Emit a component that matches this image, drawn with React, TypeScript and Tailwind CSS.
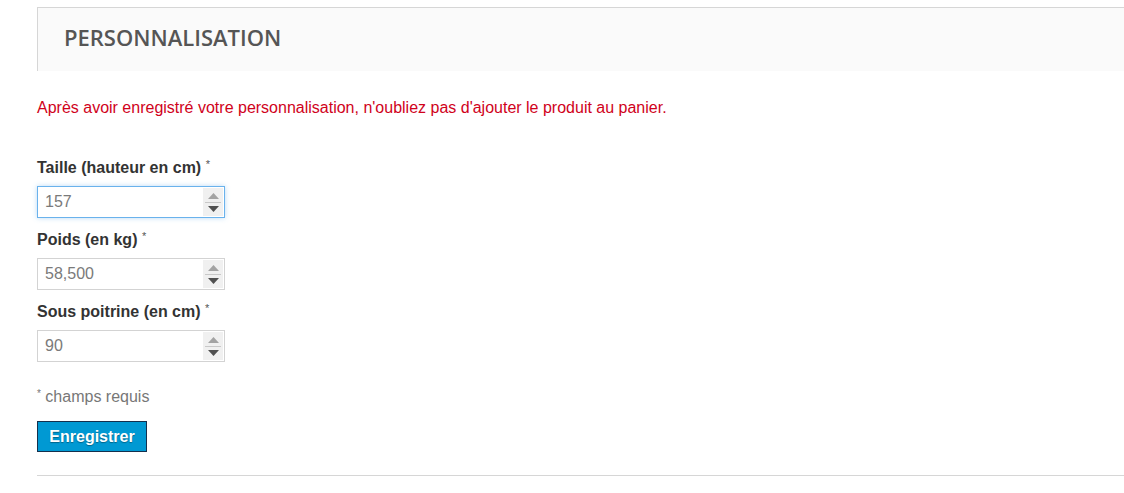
import React, { useState } from 'react';

const fields = [
  { id: "taille", label: "Taille (hauteur en cm)", value: "157", focused: true },
  { id: "poids", label: "Poids (en kg)", value: "58,500", focused: false },
  { id: "poitrine", label: "Sous poitrine (en cm)", value: "90", focused: false },
];

const NumberField = ({ label, value, focused }: { label: string; value: string; focused: boolean }) => {
  const [val, setVal] = useState(value);
  return (
    <div className="flex flex-col">
      <label className="text-[16px] leading-[18px] font-bold text-[#333]">
        {label} <sup className="font-normal text-[11px] text-[#555]">*</sup>
      </label>
      <div
        className={
          focused
            ? "mt-[9px] w-[188px] h-[32px] flex bg-white border border-[#6ab2ec] shadow-[0_0_5px_rgba(102,175,233,0.45)]"
            : "mt-[9px] w-[188px] h-[32px] flex bg-white border border-[#d3d3d3]"
        }
      >
        <input
          value={val}
          onChange={(e) => setVal(e.target.value)}
          className="flex-1 min-w-0 pl-[7px] text-[16px] text-[#7a7a7a] outline-none bg-transparent"
        />
        <div className="w-[20px] my-[1px] mr-[1px] bg-[#f0f0f0] flex flex-col items-center justify-center gap-[3px]">
          <svg width="11" height="6" viewBox="0 0 11 6"><path d="M0 6 L5.5 0 L11 6 Z" fill="#a3a3a3" /></svg>
          <div className="w-[16px] h-px bg-[#c8c8c8]" />
          <svg width="11" height="6" viewBox="0 0 11 6"><path d="M0 0 L11 0 L5.5 6 Z" fill="#505050" /></svg>
        </div>
      </div>
    </div>
  );
};

const App = () => {
  return (
    <div className="bg-white min-h-[493px] pl-[37px] pt-[7px] font-['Liberation_Sans',Arial,sans-serif]">
      <div className="h-[64px] border-t border-l border-[#d6d6d6] bg-[#fafafa] flex items-center pl-[26px]">
        <h2 className="font-['Open_Sans',sans-serif] font-semibold text-[22px] text-[#555] mb-[4px]">
          PERSONNALISATION
        </h2>
      </div>

      <p className="mt-[28px] text-[16px] leading-[18px] text-[#d0021b]">
        Après avoir enregistré votre personnalisation, n'oubliez pas d'ajouter le produit au panier.
      </p>

      <div className="mt-[42px] flex flex-col gap-[13px]">
        {fields.map((f) => (
          <NumberField key={f.id} label={f.label} value={f.value} focused={f.focused} />
        ))}
      </div>

      <p className="mt-[26px] text-[16px] leading-[18px] text-[#777]">
        <sup className="text-[10px]">*</sup> champs requis
      </p>

      <button className="mt-[15px] w-[110px] h-[31px] bg-[#0099d3] border border-[#14304d] text-white font-bold text-[16px] [text-shadow:0_1px_1px_rgba(0,0,0,0.35)]">
        Enregistrer
      </button>

      <div className="mt-[23px] border-t border-[#d6d6d6]" />
    </div>
  );
};

export default App;
